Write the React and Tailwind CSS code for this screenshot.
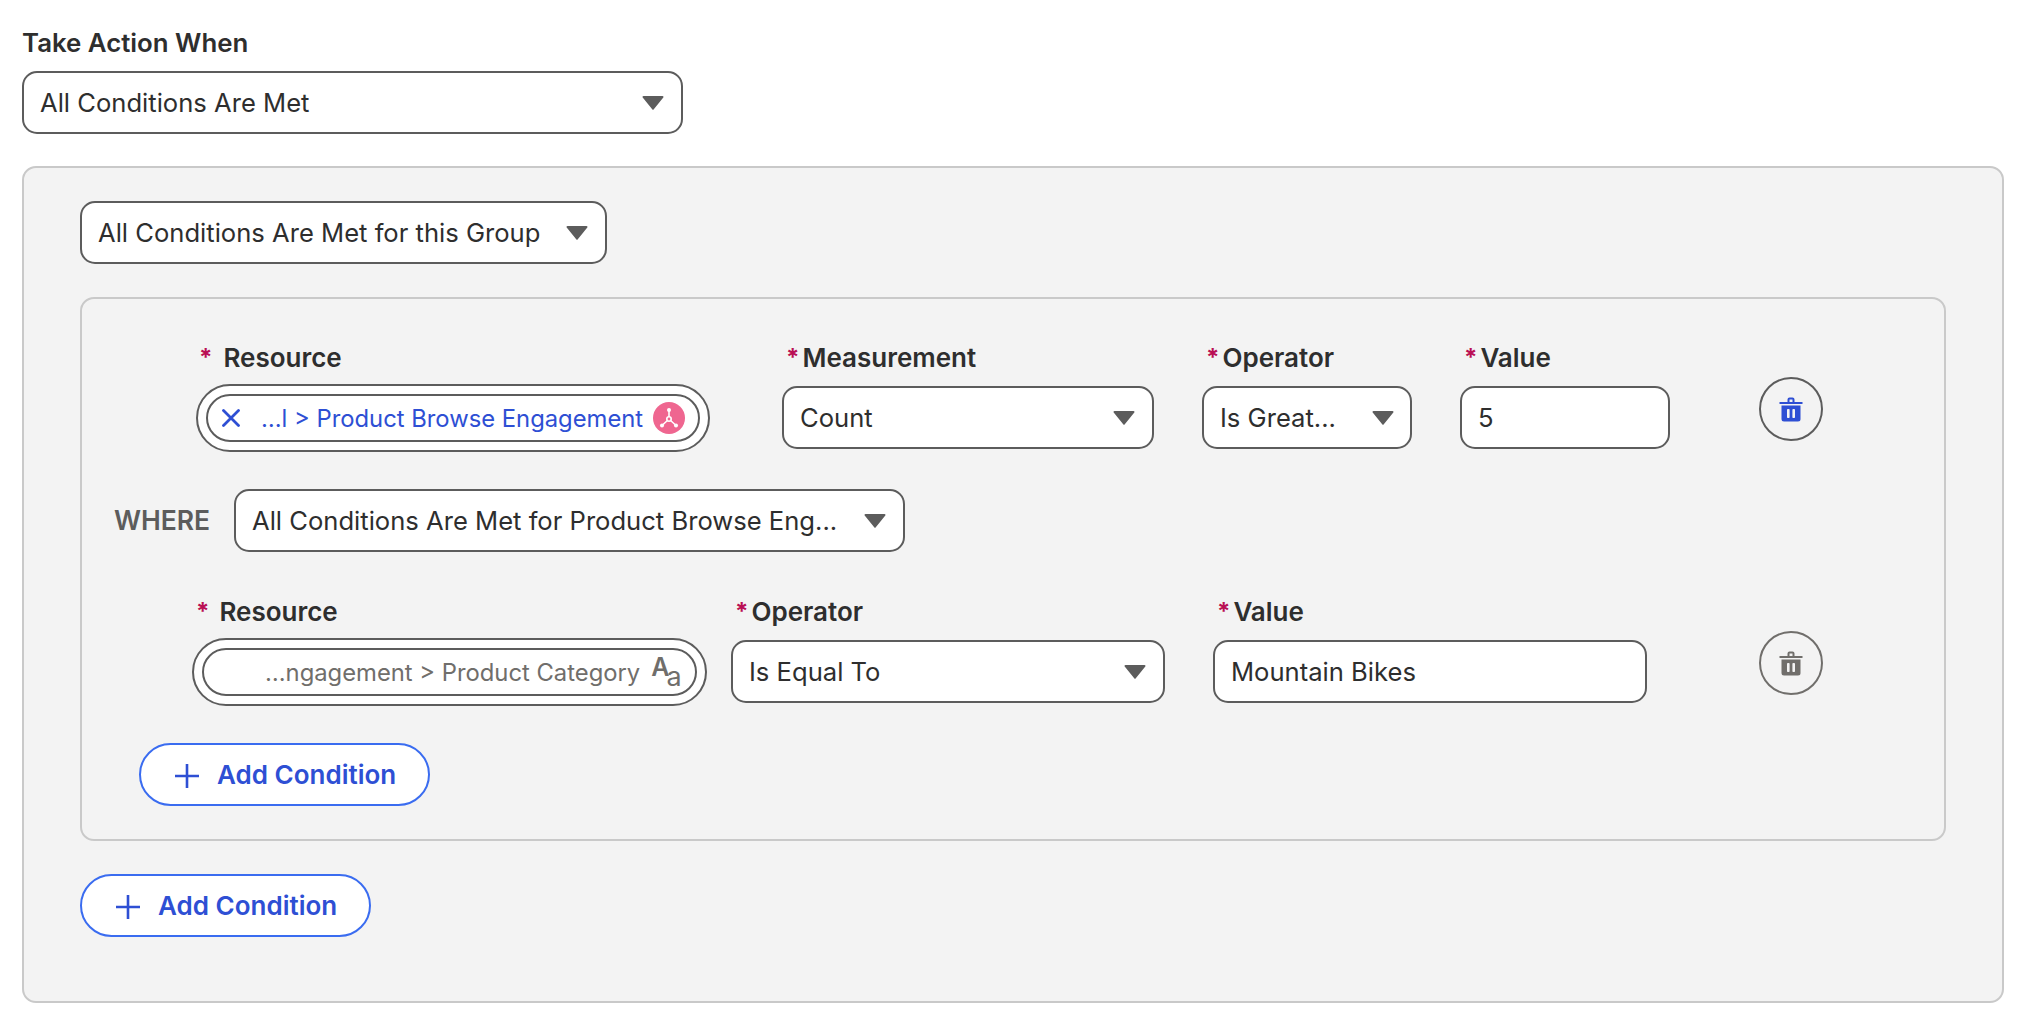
import React from "react";

const Caret = () => (
  <svg viewBox="0 0 22 15" className="w-[22px] h-[15px] shrink-0">
    <path d="M1.5 1h19a1 1 0 0 1 .8 1.6l-9.5 11.6a1 1 0 0 1-1.6 0L.7 2.6A1 1 0 0 1 1.5 1z" fill="#5c5c5c" />
  </svg>
);

const Select = ({ text, className = "", pad = "pr-[17px]" }) => (
  <div
    className={
      "flex items-center justify-between h-[63px] shrink-0 rounded-[15px] border-2 border-[#5c5c5c] bg-white pl-[16px] text-[25.6px] text-[#2e2e2e] " +
      pad +
      " " +
      className
    }
  >
    <span className="whitespace-nowrap pt-[1px]">{text}</span>
    <Caret />
  </div>
);

const Input = ({ text, className = "" }) => (
  <div
    className={
      "flex items-center h-[63px] mt-[10px] rounded-[15px] border-2 border-[#5c5c5c] bg-white pl-[16px] pt-[1px] text-[25.6px] text-[#2e2e2e] " +
      className
    }
  >
    {text}
  </div>
);

const Label = ({ text, gap = "ml-[3px]", left = "pl-[4px]" }) => (
  <div className={"flex items-center h-[40px] pt-[3px] text-[26px] font-semibold text-[#2e2e2e] leading-none " + left}>
    <span className="text-[#ba0f54] text-[24px] font-bold">*</span>
    <span className={gap}>{text}</span>
  </div>
);

const Pill = ({ children, className = "" }) => (
  <div
    className={
      "flex items-center h-[68px] shrink-0 rounded-full border-2 border-[#5c5c5c] bg-white px-[8px] " +
      className
    }
  >
    <div className="flex items-center flex-1 h-[48px] rounded-full border-2 border-[#5c5c5c] overflow-hidden">
      {children}
    </div>
  </div>
);

const Trash = ({ color, border, className = "" }) => (
  <button
    className={
      "flex items-center justify-center w-[64px] h-[64px] shrink-0 rounded-full border-2 bg-transparent " +
      border +
      " " +
      className
    }
  >
    <svg viewBox="0 0 24 26" className="w-[24px] h-[26px]">
      <path
        d="M0.5 6h23v2h-23z M8.5 6V3.5A2 2 0 0 1 10.500 1.500h3a2 2 0 0 1 2 2V6h-2V3.500h-3V6z"
        fill={color}
      />
      <path
        d="M2.500 9.500h19V23a2.500 2.500 0 0 1-2.500 2.500H5A2.500 2.500 0 0 1 2.500 23z"
        fill={color}
      />
      <rect x="8" y="13" width="2.600" height="9" rx="0.800" fill="#f3f3f3" />
      <rect x="13.400" y="13" width="2.600" height="9" rx="0.800" fill="#f3f3f3" />
    </svg>
  </button>
);

const AddButton = ({ className = "" }) => (
  <button
    className={
      "flex items-center h-[63px] w-[291px] rounded-full border-2 border-[#3a6cf0] bg-white pl-[34px] text-[#2e4fd4] text-[26px] font-semibold " +
      className
    }
  >
    <svg viewBox="0 0 24 24" className="w-[24px] h-[24px] shrink-0 mt-[2px]">
      <path d="M10.700 0h2.600v10.700H24v2.600H13.300V24h-2.600V13.300H0v-2.600h10.700z" fill="#2e4fd4" />
    </svg>
    <span className="ml-[18px] whitespace-nowrap">Add Condition</span>
  </button>
);

const App = () => {
  return (
    <div
      className="w-[2034px] h-[1028px] bg-white pl-[22px] pt-[23px] overflow-hidden"
      style={{ fontFamily: "Inter, 'Liberation Sans', sans-serif" }}
    >
      <div className="h-[40px] flex items-center text-[25.800px] font-semibold text-[#2e2e2e]">Take Action When</div>
      <Select text="All Conditions Are Met" className="w-[661px] mt-[8px]" />

      <div className="mt-[32px] w-[1982px] h-[837px] rounded-[14px] border-2 border-[#c9c9c9] bg-[#f3f3f3] pl-[56px] pt-[33px]">
        <Select text="All Conditions Are Met for this Group" className="w-[527px]" />

        <div className="mt-[33px] w-[1866px] h-[544px] rounded-[14px] border-2 border-[#c9c9c9] pt-[37px]">
          {/* first condition */}
          <div className="flex items-start pl-[114px]">
            <div className="w-[514px] shrink-0">
              <Label text="Resource" gap="ml-[11px]" left="pl-[3px]" />
              <Pill className="mt-[8px]">
                <svg viewBox="0 0 18 18" className="w-[18px] h-[18px] ml-[14px] shrink-0">
                  <path d="M1.500 1.500l15 15M16.500 1.500l-15 15" stroke="#2e4fd4" strokeWidth="2.800" strokeLinecap="round" />
                </svg>
                <span className="ml-[21px] pt-[1px] text-[23.800px] text-[#2e4fd4] whitespace-nowrap">…l &gt; Product Browse Engagement</span>
                <span className="ml-[10px] flex items-center justify-center w-[32px] h-[32px] rounded-full bg-[#ef6690] shrink-0">
                  <svg viewBox="0 0 24 24" className="w-[24px] h-[24px]">
                    <path d="M12 4v9M12 13l-7 6.500M12 13l7 6.500" stroke="#fff" strokeWidth="1.600" fill="none" />
                    <circle cx="12" cy="4" r="2" fill="#fff" />
                    <circle cx="12" cy="13" r="2.200" fill="#ef6690" stroke="#fff" strokeWidth="1.600" />
                    <circle cx="5" cy="19.500" r="2" fill="#fff" />
                    <circle cx="19" cy="19.500" r="2" fill="#fff" />
                  </svg>
                </span>
              </Pill>
            </div>
            <div className="ml-[72px] w-[372px] shrink-0">
              <Label text="Measurement" />
              <Select text="Count" className="mt-[10px]" />
            </div>
            <div className="ml-[48px] w-[210px] shrink-0">
              <Label text="Operator" />
              <Select text="Is Great..." className="mt-[10px]" pad="pr-[16px]" />
            </div>
            <div className="ml-[48px] w-[210px] shrink-0">
              <Label text="Value" />
              <Input text="5" />
            </div>
            <Trash color="#2e4fd4" border="border-[#5c5c5c]" className="ml-[89px] mt-[41px]" />
          </div>

          {/* where row */}
          <div className="flex items-center mt-[37px] pl-[32px]">
            <span className="w-[120px] text-[26.500px] font-semibold text-[#5c5c5c]">WHERE</span>
            <Select text="All Conditions Are Met for Product Browse Eng..." className="w-[671px]" />
          </div>

          {/* second condition */}
          <div className="flex items-start mt-[38px] pl-[110px]">
            <div className="w-[515px] shrink-0">
              <Label text="Resource" gap="ml-[10px]" />
              <Pill className="mt-[8px]">
                <span className="ml-[61px] pt-[1px] text-[23.800px] text-[#706e6b] whitespace-nowrap">…ngagement &gt; Product Category</span>
                <span className="ml-[11px] flex items-baseline text-[#706e6b] leading-none shrink-0 translate-y-[4px]">
                  <span className="text-[25px] font-semibold -translate-y-[10px]">A</span>
                  <span className="text-[27px] -ml-[3px]">a</span>
                </span>
              </Pill>
            </div>
            <div className="ml-[24px] w-[434px] shrink-0">
              <Label text="Operator" />
              <Select text="Is Equal To" className="mt-[10px]" />
            </div>
            <div className="ml-[48px] w-[434px] shrink-0">
              <Label text="Value" />
              <Input text="Mountain Bikes" />
            </div>
            <Trash color="#706e6b" border="border-[#706e6b]" className="ml-[112px] mt-[41px]" />
          </div>

          <AddButton className="mt-[37px] ml-[57px]" />
        </div>

        <AddButton className="mt-[33px]" />
      </div>
    </div>
  );
};

export default App;
